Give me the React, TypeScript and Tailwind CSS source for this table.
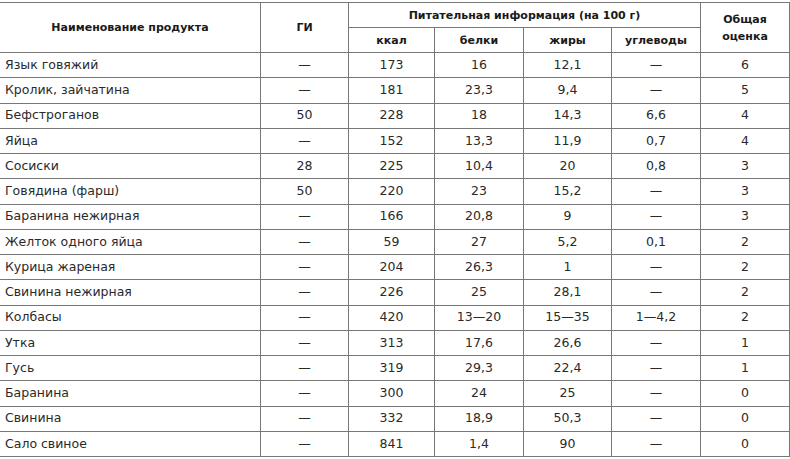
const rows: [string, string, string, string, string, string, string][] = [
  ['Язык говяжий', '—', '173', '16', '12,1', '—', '6'],
  ['Кролик, зайчатина', '—', '181', '23,3', '9,4', '—', '5'],
  ['Бефстроганов', '50', '228', '18', '14,3', '6,6', '4'],
  ['Яйца', '—', '152', '13,3', '11,9', '0,7', '4'],
  ['Сосиски', '28', '225', '10,4', '20', '0,8', '3'],
  ['Говядина (фарш)', '50', '220', '23', '15,2', '—', '3'],
  ['Баранина нежирная', '—', '166', '20,8', '9', '—', '3'],
  ['Желток одного яйца', '—', '59', '27', '5,2', '0,1', '2'],
  ['Курица жареная', '—', '204', '26,3', '1', '—', '2'],
  ['Свинина нежирная', '—', '226', '25', '28,1', '—', '2'],
  ['Колбасы', '—', '420', '13—20', '15—35', '1—4,2', '2'],
  ['Утка', '—', '313', '17,6', '26,6', '—', '1'],
  ['Гусь', '—', '319', '29,3', '22,4', '—', '1'],
  ['Баранина', '—', '300', '24', '25', '—', '0'],
  ['Свинина', '—', '332', '18,9', '50,3', '—', '0'],
  ['Сало свиное', '—', '841', '1,4', '90', '—', '0'],
];

const cell = 'border border-[#777]';
const head = 'border border-[#777] text-center font-bold text-[11px] text-[#1a1a1a] leading-[17px]';

export default function App() {
  return (
    <div className="w-[790px] h-[459px] bg-white overflow-hidden pt-[2px]">
      <table
        className="ml-[-1px] w-[790px] border-collapse table-fixed text-[#2a2a2a]"
        style={{ fontFamily: '"DejaVu Sans", "Liberation Sans", sans-serif' }}
      >
        <colgroup>
          <col className="w-[261px]" />
          <col className="w-[88px]" />
          <col className="w-[86px]" />
          <col className="w-[89px]" />
          <col className="w-[88px]" />
          <col className="w-[89px]" />
          <col className="w-[89px]" />
        </colgroup>
        <thead>
          <tr className="h-[25px]">
            <th rowSpan={2} className={head}>Наименование продукта</th>
            <th rowSpan={2} className={head}>ГИ</th>
            <th colSpan={4} className={head}>Питательная информация (на 100 г)</th>
            <th rowSpan={2} className={head}>
              Общая
              <br />
              оценка
            </th>
          </tr>
          <tr className="h-[25px]">
            <th className={head}>ккал</th>
            <th className={head}>белки</th>
            <th className={head}>жиры</th>
            <th className={head}>углеводы</th>
          </tr>
        </thead>
        <tbody className="text-[12.5px]">
          {rows.map((r) => (
            <tr key={r[0]} className="h-[25.25px]">
              <td className={`${cell} pl-[5px] text-left`}>{r[0]}</td>
              {r.slice(1).map((v, i) => (
                <td key={i} className={`${cell} text-center`}>
                  {v}
                </td>
              ))}
            </tr>
          ))}
        </tbody>
      </table>
    </div>
  );
}
